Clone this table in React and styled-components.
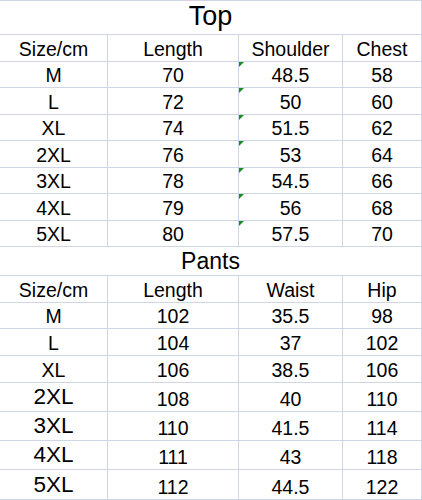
import React from 'react'
import styled, { createGlobalStyle } from 'styled-components'

const GlobalStyle = createGlobalStyle`
  html, body {
    margin: 0;
    padding: 0;
    background: #ffffff;
  }
  body {
    font-family: "Liberation Sans", Arial, sans-serif;
    color: #000000;
  }
`

const GRID = '#d0d5e5'

const Sheet = styled.div`
  width: 422px;
  border-top: 1px solid ${GRID};
`

const Table = styled.div`
  display: grid;
  grid-template-columns: 108px 131px 104px 79px;
  grid-template-rows: ${p => p.$rows};
`

const Title = styled.div`
  grid-column: 1 / -1;
  display: flex;
  align-items: flex-end;
  justify-content: center;
  border-bottom: 1px solid ${GRID};
  border-right: 1px solid ${GRID};
  font-size: ${p => p.$size}px;
  line-height: 1;
  padding-bottom: ${p => p.$pad}px;
  box-sizing: border-box;
`

const Cell = styled.div`
  position: relative;
  display: flex;
  align-items: flex-end;
  justify-content: center;
  border-bottom: 1px solid ${GRID};
  border-right: 1px solid ${GRID};
  font-size: ${p => p.$size || 19.5}px;
  line-height: 1;
  padding-bottom: ${p => (p.$size ? 2.5 : 2)}px;
  box-sizing: border-box;
  white-space: nowrap;

  ${p => p.$flag && `
    &::before {
      content: '';
      position: absolute;
      top: 0;
      left: 0;
      width: 0;
      height: 0;
      border-top: 5px solid #1e8a24;
      border-right: 5px solid transparent;
    }
  `}
`

const top = [
  ['Size/cm', 'Length', 'Shoulder', 'Chest'],
  ['M', '70', '48.5', '58'],
  ['L', '72', '50', '60'],
  ['XL', '74', '51.5', '62'],
  ['2XL', '76', '53', '64'],
  ['3XL', '78', '54.5', '66'],
  ['4XL', '79', '56', '68'],
  ['5XL', '80', '57.5', '70'],
]

const pants = [
  ['Size/cm', 'Length', 'Waist', 'Hip'],
  ['M', '102', '35.5', '98'],
  ['L', '104', '37', '102'],
  ['XL', '106', '38.5', '106'],
  ['2XL', '108', '40', '110'],
  ['3XL', '110', '41.5', '114'],
  ['4XL', '111', '43', '118'],
  ['5XL', '112', '44.5', '122'],
]

export default function App() {
  return (
    <>
      <GlobalStyle />
      <Sheet>
        <Table $rows="34px 27px 26px 27px 26px 27px 26px 27px 26px">
          <Title $size={27} $pad={4}>Top</Title>
          {top.map((row, r) =>
            row.map((v, c) => (
              <Cell key={`t${r}-${c}`} $flag={r > 0 && c === 2}>{v}</Cell>
            ))
          )}
        </Table>
        <Table $rows="29px 27px 26px 27px 27px 29px 29px 29px 30px">
          <Title $size={23} $pad={2}>Pants</Title>
          {pants.map((row, r) =>
            row.map((v, c) => (
              <Cell key={`p${r}-${c}`} $size={r > 3 && c === 0 ? 22.5 : undefined}>{v}</Cell>
            ))
          )}
        </Table>
      </Sheet>
    </>
  )
}
